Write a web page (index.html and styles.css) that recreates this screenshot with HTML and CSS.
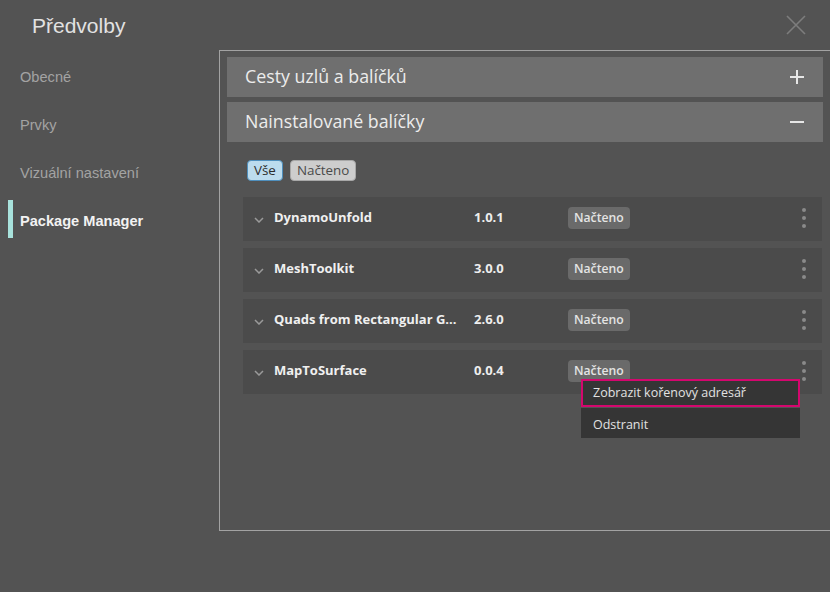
FILE: index.html
```html
<!DOCTYPE html>
<html lang="cs">
<head>
<meta charset="utf-8">
<title>Předvolby</title>
<link rel="stylesheet" href="styles.css">
</head>
<body>
<div class="window">
  <header class="titlebar">
    <h1 class="title">Předvolby</h1>
    <svg class="close" width="20" height="20" viewBox="0 0 20 20"><path d="M1 1 L19 19 M19 1 L1 19" stroke="#7d7d7d" stroke-width="1.6" fill="none"/></svg>
  </header>
  <div class="main">
    <nav class="sidebar">
      <div class="nav-item">Obecné</div>
      <div class="nav-item">Prvky</div>
      <div class="nav-item">Vizuální nastavení</div>
      <div class="nav-item active">Package Manager</div>
    </nav>
    <section class="panel">
      <div class="acc-header">
        <span>Cesty uzlů a balíčků</span>
        <svg class="acc-icon" width="14" height="14" viewBox="0 0 14 14"><path d="M0 7 H14 M7 0 V14" stroke="#e6e6e6" stroke-width="2"/></svg>
      </div>
      <div class="acc-header">
        <span>Nainstalované balíčky</span>
        <svg class="acc-icon" width="14" height="14" viewBox="0 0 14 14"><path d="M0 7 H14" stroke="#e6e6e6" stroke-width="2"/></svg>
      </div>
      <div class="chips">
        <span class="chip chip-on">Vše</span>
        <span class="chip chip-off">Načteno</span>
      </div>
      <div class="rows">
        <div class="row">
          <svg class="chev" width="10" height="6" viewBox="0 0 10 6"><path d="M1 1 L5 5 L9 1" stroke="#9a9a9a" stroke-width="1.5" fill="none"/></svg>
          <span class="name">DynamoUnfold</span>
          <span class="ver">1.0.1</span>
          <span class="badge">Načteno</span>
          <svg class="kebab" width="4" height="20" viewBox="0 0 4 20"><circle cx="2" cy="2" r="2" fill="#8a8a8a"/><circle cx="2" cy="10" r="2" fill="#8a8a8a"/><circle cx="2" cy="18" r="2" fill="#8a8a8a"/></svg>
        </div>
        <div class="row">
          <svg class="chev" width="10" height="6" viewBox="0 0 10 6"><path d="M1 1 L5 5 L9 1" stroke="#9a9a9a" stroke-width="1.5" fill="none"/></svg>
          <span class="name">MeshToolkit</span>
          <span class="ver">3.0.0</span>
          <span class="badge">Načteno</span>
          <svg class="kebab" width="4" height="20" viewBox="0 0 4 20"><circle cx="2" cy="2" r="2" fill="#8a8a8a"/><circle cx="2" cy="10" r="2" fill="#8a8a8a"/><circle cx="2" cy="18" r="2" fill="#8a8a8a"/></svg>
        </div>
        <div class="row">
          <svg class="chev" width="10" height="6" viewBox="0 0 10 6"><path d="M1 1 L5 5 L9 1" stroke="#9a9a9a" stroke-width="1.5" fill="none"/></svg>
          <span class="name">Quads from Rectangular G...</span>
          <span class="ver">2.6.0</span>
          <span class="badge">Načteno</span>
          <svg class="kebab" width="4" height="20" viewBox="0 0 4 20"><circle cx="2" cy="2" r="2" fill="#8a8a8a"/><circle cx="2" cy="10" r="2" fill="#8a8a8a"/><circle cx="2" cy="18" r="2" fill="#8a8a8a"/></svg>
        </div>
        <div class="row">
          <svg class="chev" width="10" height="6" viewBox="0 0 10 6"><path d="M1 1 L5 5 L9 1" stroke="#9a9a9a" stroke-width="1.5" fill="none"/></svg>
          <span class="name">MapToSurface</span>
          <span class="ver">0.0.4</span>
          <span class="badge">Načteno</span>
          <svg class="kebab" width="4" height="20" viewBox="0 0 4 20"><circle cx="2" cy="2" r="2" fill="#8a8a8a"/><circle cx="2" cy="10" r="2" fill="#8a8a8a"/><circle cx="2" cy="18" r="2" fill="#8a8a8a"/></svg>
        </div>
      </div>
    </section>
  </div>
  <div class="menu">
    <div class="menu-item selected">Zobrazit kořenový adresář</div>
    <div class="menu-item">Odstranit</div>
  </div>
</div>
</body>
</html>
```
FILE: styles.css
```css
html, body {
  margin: 0;
  padding: 0;
  background: #535353;
}
body {
  width: 830px;
  height: 592px;
  overflow: hidden;
  font-family: "Open Sans", "Liberation Sans", sans-serif;
}
.window {
  position: relative;
  width: 830px;
  height: 592px;
  overflow: hidden;
}
.titlebar {
  height: 50px;
  display: flex;
  justify-content: space-between;
  align-items: flex-start;
  padding: 0 24px 0 32px;
  box-sizing: border-box;
}
.title {
  margin: 0;
  padding-top: 12px;
  font-family: "Liberation Sans", Arial, sans-serif;
  font-weight: normal;
  font-size: 21px;
  line-height: 28px;
  color: #e2e2e2;
}
.close {
  margin-top: 15px;
}
.main {
  display: flex;
  height: 481px;
}
.sidebar {
  width: 219px;
  flex-shrink: 0;
  padding: 6px 0 0 8px;
  box-sizing: border-box;
  display: flex;
  flex-direction: column;
  gap: 10px;
}
.nav-item {
  height: 38px;
  box-sizing: border-box;
  padding-top: 4px;
  line-height: 34px;
  padding-left: 7px;
  border-left: 5px solid transparent;
  font-family: "Liberation Sans", Arial, sans-serif;
  font-size: 14.6px;
  color: #a3a3a3;
}
.nav-item.active {
  border-left-color: #a8e2dc;
  color: #f2f2f2;
  font-weight: bold;
}
.panel {
  width: 612px;
  flex-shrink: 0;
  height: 481px;
  box-sizing: border-box;
  border: 1px solid #a2a2a2;
  padding: 6px 7px;
}
.acc-header {
  height: 40px;
  margin-bottom: 5px;
  background: #6f6f6f;
  display: flex;
  align-items: center;
  justify-content: space-between;
  padding: 0 19px 0 18px;
  font-size: 17.8px;
  color: #ececec;
}
.acc-header span {
  margin-top: -3px;
}
.chips {
  display: flex;
  gap: 7px;
  padding-left: 20px;
  margin-top: 18px;
}
.chip {
  height: 21px;
  box-sizing: border-box;
  line-height: 19px;
  font-size: 13.4px;
  padding: 0 6px;
  border-radius: 4px;
}
.chip-on {
  background: #bcdcee;
  border: 1px solid #4f8fbd;
  color: #2c2c2c;
}
.chip-off {
  background: #cdcdcd;
  border: 1px solid #a8a8a8;
  color: #4a4a4a;
}
.rows {
  margin: 16px 1px 0 16px;
  display: flex;
  flex-direction: column;
  gap: 7px;
}
.row {
  height: 44px;
  background: #4b4b4b;
  display: flex;
  align-items: center;
  padding: 0 16px 3px 11px;
  box-sizing: border-box;
}
.chev {
  margin-top: 5px;
  margin-right: 10px;
  flex-shrink: 0;
}
.name {
  width: 200px;
  font-size: 13px;
  font-weight: bold;
  color: #f0f0f0;
  white-space: nowrap;
  margin-top: -2px;
}
.ver {
  width: 94px;
  font-size: 13px;
  font-weight: bold;
  color: #eeeeee;
  margin-top: -2px;
}
.badge {
  height: 22px;
  line-height: 22px;
  padding: 0 6px;
  border-radius: 4px;
  background: #6a6a6a;
  color: #e4e4e4;
  font-size: 12.2px;
  font-weight: 600;
}
.kebab {
  margin-left: auto;
}
.menu {
  position: absolute;
  left: 581px;
  top: 379px;
  width: 219px;
  display: flex;
  flex-direction: column;
  gap: 1px;
}
.menu-item {
  background: #353535;
  height: 30px;
  line-height: 30px;
  padding: 2px 0 0 12px;
  box-sizing: border-box;
  font-size: 12.5px;
  color: #e2e2e2;
}
.menu-item.selected {
  height: 28px;
  line-height: 24px;
  border: 2px solid #d4076e;
  padding: 0 0 0 10px;
}
```
